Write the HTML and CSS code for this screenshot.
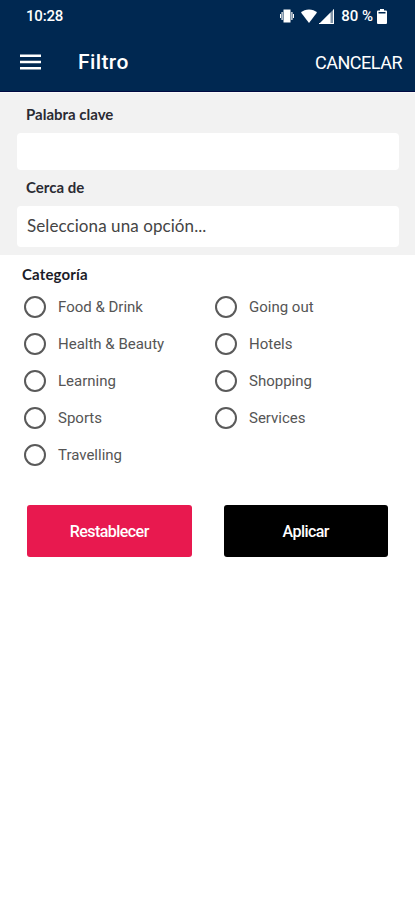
FILE: index.html
```html
<!DOCTYPE html>
<html lang="es">
<head>
  <meta charset="UTF-8">
  <meta name="viewport" content="width=device-width, initial-scale=1">
  <title>Filtro</title>
  <link rel="stylesheet" href="styles.css">
</head>
<body>
  <header class="header">
    <div class="status-bar">
      <span class="status-time">10:28</span>
      <svg class="icon-vibrate" viewBox="0 0 14 14" width="14" height="14">
        <path d="M3.5 0.5h7v13h-7zM1.500 3h1.200v8H1.500zM11.300 3h1.200v8h-1.200zM0 5h1v4H0zM13 5h1v4h-1z" fill="#fff"/>
      </svg>
      <svg class="icon-wifi" viewBox="0 0 16 14" width="16" height="14">
        <path d="M8 14L0 3.600C2 1.800 4.800 0.500 8 0.500s6 1.300 8 3.100z" fill="#fff"/>
      </svg>
      <svg class="icon-signal" viewBox="0 0 15 15" width="15" height="15">
        <path d="M0 15L15 0v15z" fill="#fff" fill-opacity="0.5"/>
        <path d="M0 15L11.500 3.500V15zM14 1l1-1v15H0v-1h14z" fill="#fff"/>
      </svg>
      <span class="status-level">80 %</span>
      <svg class="icon-battery" viewBox="0 0 10 15" width="10" height="15">
        <path d="M3 0h4v1.500h2a1 1 0 0 1 1 1V14a1 1 0 0 1-1 1H1a1 1 0 0 1-1-1V2.500a1 1 0 0 1 1-1h2z" fill="#fff"/>
        <path d="M1.500 3h7v1.500h-7z" fill="#002851"/>
      </svg>
    </div>
    <div class="toolbar">
      <svg class="icon-menu" viewBox="0 0 21 16" width="21" height="16">
        <path d="M0 0.500h21v2.400H0zM0 6.800h21v2.400H0zM0 13.100h21v2.400H0z" fill="#fff"/>
      </svg>
      <h1 class="title">Filtro</h1>
      <a class="cancel">CANCELAR</a>
    </div>
  </header>

  <section class="search">
    <label class="label" for="keyword">Palabra clave</label>
    <input class="field" id="keyword" type="text">
    <div class="label">Cerca de</div>
    <div class="field field-select">Selecciona una opción...</div>
  </section>

  <section class="category">
    <h2 class="category-title">Categoría</h2>
    <div class="options">
      <label class="option"><input type="radio" name="category"><span>Food &amp; Drink</span></label>
      <label class="option"><input type="radio" name="category"><span>Going out</span></label>
      <label class="option"><input type="radio" name="category"><span>Health &amp; Beauty</span></label>
      <label class="option"><input type="radio" name="category"><span>Hotels</span></label>
      <label class="option"><input type="radio" name="category"><span>Learning</span></label>
      <label class="option"><input type="radio" name="category"><span>Shopping</span></label>
      <label class="option"><input type="radio" name="category"><span>Sports</span></label>
      <label class="option"><input type="radio" name="category"><span>Services</span></label>
      <label class="option"><input type="radio" name="category"><span>Travelling</span></label>
    </div>
  </section>

  <div class="buttons">
    <button class="btn btn-reset">Restablecer</button>
    <button class="btn btn-apply">Aplicar</button>
  </div>
</body>
</html>
```

FILE: styles.css
```css
* {
  box-sizing: border-box;
}
body {
  margin: 0;
  min-height: 100vh;
  background: #fff;
  font-family: Roboto, sans-serif;
}
.header {
  height: 92px;
  background: #002851;
  border-bottom: 1px solid #000a42;
  color: #fff;
}
.status-bar {
  display: flex;
  align-items: center;
  height: 32px;
  padding: 0 28px 0 26px;
  font-size: 15px;
  font-weight: 500;
}
.status-time {
  margin-right: auto;
  letter-spacing: -0.2px;
}
.icon-wifi {
  margin-left: 7px;
}
.icon-signal {
  margin: 0 7px 0 2px;
}
.icon-battery {
  margin-left: 4px;
}
.toolbar {
  display: flex;
  align-items: center;
  height: 60px;
  padding: 0 13px 0 20px;
}
.title {
  margin: 0 auto 0 37px;
  font-size: 21px;
  font-weight: 500;
  letter-spacing: 0.4px;
}
.cancel {
  font-size: 18px;
  letter-spacing: -0.5px;
}
.search {
  height: 163px;
  padding: 12px 16px 0 17px;
  border-top: 1px solid #fafafa;
  background: #f2f2f2;
}
.label {
  display: block;
  height: 20px;
  margin: 0 0 8px 9px;
  color: #2b2b33;
  font: bold 15px/19px Lato, sans-serif;
}
.field {
  display: block;
  width: 100%;
  height: 37px;
  margin-bottom: 8px;
  padding: 0 10px;
  border: 0;
  border-radius: 4px;
  background: #fff;
}
.field-select {
  height: 41px;
  margin: 0;
  color: #444;
  font: 17px/40px Lato, sans-serif;
  letter-spacing: 0.08px;
}
.category {
  padding: 9px 24px 0;
}
.category-title {
  margin: 0 0 4px -2px;
  color: #1c1c28;
  font: bold 15px/20px Lato, sans-serif;
  letter-spacing: 0.15px;
}
.options {
  display: grid;
  grid-template-columns: 191px 1fr;
  grid-auto-rows: 37px;
}
.option {
  display: flex;
  align-items: center;
  gap: 12px;
  color: #555;
  font-size: 15px;
}
.option input {
  appearance: none;
  width: 22px;
  height: 22px;
  margin: 0;
  border: 2px solid #5a5a5a;
  border-radius: 50%;
}
.option input:checked {
  background: radial-gradient(#e8194f 5px, transparent 6px);
}
.buttons {
  display: flex;
  gap: 32px;
  padding: 32px 27px 0;
}
.btn {
  flex: 1;
  height: 52px;
  padding-top: 2px;
  border: 0;
  border-radius: 3px;
  color: #fff;
  font: 500 16px Roboto, sans-serif;
  letter-spacing: -0.55px;
}
.btn-reset {
  background: #e8194f;
}
.btn-apply {
  background: #000;
}
```
